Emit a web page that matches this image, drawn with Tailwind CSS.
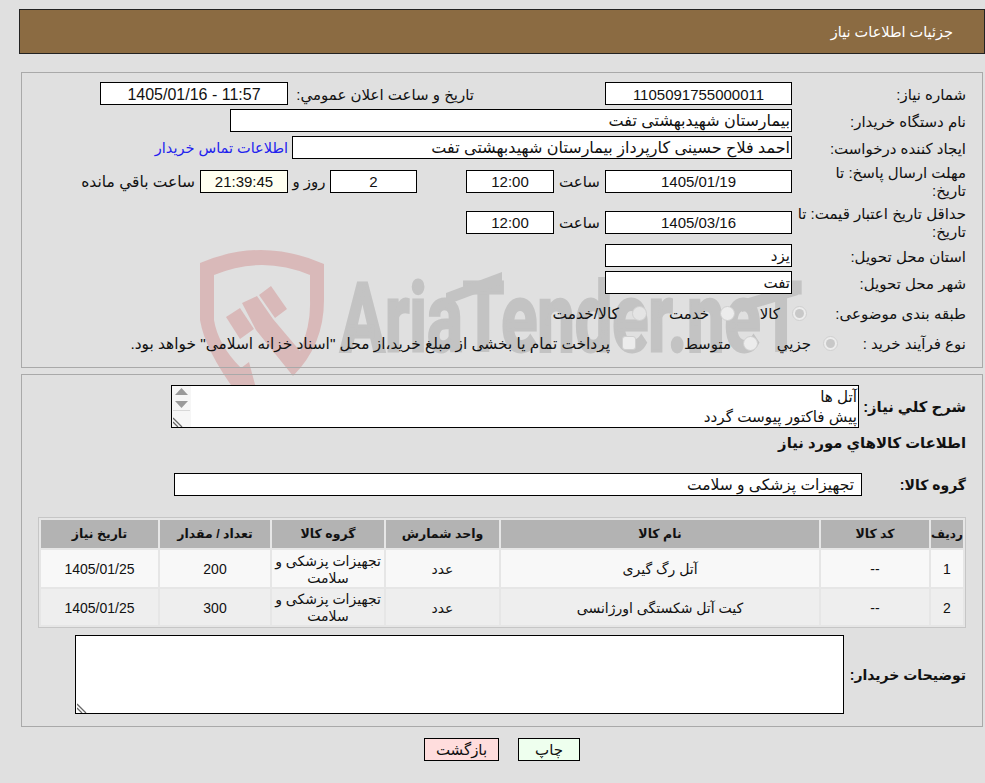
<!DOCTYPE html>
<html lang="fa" dir="rtl">
<head>
<meta charset="utf-8">
<script src="https://cdn.jsdelivr.net/npm/@tailwindcss/browser@4"></script>
<title>جزئیات اطلاعات نیاز</title>
</head>
<body class="m-0 bg-[#e0e0e0]">
<div class="relative w-[985px] h-[783px] overflow-hidden bg-[#e0e0e0] text-[#111] text-[15px] leading-[18px] font-['Liberation_Sans','DejaVu_Sans',sans-serif]">

  <svg class="absolute left-0 top-0 z-0" width="985" height="400" viewBox="0 0 985 400" aria-hidden="true">
    <path fill="#d9b9b9" d="M200 263Q262 236.500 324 264L324 300Q324 345 293 376L256 330L242 303L257 296L273 319L300 351Q311 325 310 300L310 275Q262 255 214 275L214 320Q218 345 241 368L249 362L257 392L236 392Q205 350 200 320Z"/>
    <path fill="#d9b9b9" d="M226 317L240 308L254 329L240 339Z"/>
    <path fill="#d9b9b9" d="M259 295L271 286L287 309L275 318Z"/>
    <text x="340" y="351" textLength="462" lengthAdjust="spacingAndGlyphs" fill="#c3c3c3" stroke="#c3c3c3" stroke-width="3" font-family="Roboto" font-weight="700" font-size="96" direction="ltr">AriaTender.neT</text>
    <polygon fill="#c3c3c3" points="446,293 502,272 502,284 446,305"/>
    <polygon fill="#c3c3c3" points="742,300 798,283 798,295 742,312"/>
  </svg>

  <div class="relative z-10 pt-[9px] pl-[19px]">
    <header class="h-[45px] border border-[#222] bg-[#8b6b42] pr-[31px] flex items-center text-white text-[14.500px]">جزئیات اطلاعات نیاز</header>

    <section class="mt-[18px] mr-[2px] ml-[2px] h-[296px] border border-[#a9a9a9] pr-[16px] pt-[9px]">
      <div class="flex h-[23px] items-center">
        <div class="w-[174px] shrink-0 pt-[2px]">شماره نیاز:</div>
        <div class="w-[187px] h-full border border-black bg-white flex items-center justify-center pt-[2px]" dir="ltr">1105091755000011</div>
        <div class="w-[131px] shrink-0"></div>
        <div class="w-[186px] shrink-0 pt-[2px]">تاریخ و ساعت اعلان عمومي:</div>
        <div class="w-[188px] h-full border border-black bg-white flex items-center justify-center text-[16px] pt-[2px]" dir="ltr">1405/01/16 - 11:57</div>
      </div>
      <div class="flex h-[23px] items-center mt-[4px]">
        <div class="w-[174px] shrink-0 pt-[2px]">نام دستگاه خریدار:</div>
        <div class="w-[562px] h-full border border-black bg-white flex items-center pr-[1px] text-[16px]">بیمارستان شهیدبهشتی تفت</div>
      </div>
      <div class="flex h-[23px] items-center mt-[4px]">
        <div class="w-[174px] shrink-0 pt-[2px]">ایجاد کننده درخواست:</div>
        <div class="w-[500px] h-full border border-black bg-white flex items-center pr-[1px] text-[16px]">احمد فلاح حسینی کارپرداز بیمارستان شهیدبهشتی تفت</div>
        <a class="mr-[4px] text-[#2222ee] text-[14.500px]">اطلاعات تماس خریدار</a>
      </div>
      <div class="flex h-[36px] items-center mt-[4px]">
        <div class="w-[174px] shrink-0 pl-[20px] pt-[2px]">مهلت ارسال پاسخ: تا تاریخ:</div>
        <div class="w-[187px] h-[23px] border border-black bg-white flex items-center justify-center pt-[2px]" dir="ltr">1405/01/19</div>
        <div class="w-[51px] text-center shrink-0 pt-[2px]">ساعت</div>
        <div class="w-[88px] h-[23px] border border-black bg-white flex items-center justify-center pt-[2px]" dir="ltr">12:00</div>
        <div class="w-[49px] shrink-0"></div>
        <div class="w-[87px] h-[23px] border border-black bg-white flex items-center justify-center pt-[2px]" dir="ltr">2</div>
        <div class="w-[42px] text-center shrink-0 pt-[2px]">روز و</div>
        <div class="w-[88px] h-[23px] border border-black bg-[#fffff0] flex items-center justify-center pt-[2px]" dir="ltr">21:39:45</div>
        <div class="mr-[5px] pt-[2px] text-[15.500px]">ساعت باقي مانده</div>
      </div>
      <div class="flex h-[36px] items-center mt-[5px]">
        <div class="w-[174px] shrink-0 pl-[2px] pt-[2px]">حداقل تاریخ اعتبار قیمت: تا تاریخ:</div>
        <div class="w-[187px] h-[23px] border border-black bg-white flex items-center justify-center pt-[2px]" dir="ltr">1405/03/16</div>
        <div class="w-[51px] text-center shrink-0 pt-[2px]">ساعت</div>
        <div class="w-[88px] h-[23px] border border-black bg-white flex items-center justify-center pt-[2px]" dir="ltr">12:00</div>
      </div>
      <div class="flex h-[23px] items-center mt-[4px]">
        <div class="w-[174px] shrink-0 pt-[2px]">استان محل تحویل:</div>
        <div class="w-[187px] h-full border border-black bg-white flex items-center pr-[1px]">یزد</div>
      </div>
      <div class="flex h-[23px] items-center mt-[4px]">
        <div class="w-[174px] shrink-0 pt-[2px]">شهر محل تحویل:</div>
        <div class="w-[187px] h-full border border-black bg-white flex items-center pr-[1px]">تفت</div>
      </div>
      <div class="flex h-[30px] items-center mt-[4px]">
        <div class="w-[159px] shrink-0 pt-[2px]">طبقه بندی موضوعی:</div>
        <div class="w-[72px] shrink-0 flex items-center gap-[12px]">
          <span class="size-[15px] rounded-full border border-[#d0d0d0] bg-[#ececec] shrink-0 flex items-center justify-center"><span class="size-[9px] rounded-full bg-[#c8c8c8]"></span></span><span class="pt-[2px]">کالا</span>
        </div>
        <div class="w-[88px] shrink-0 flex items-center gap-[11px]">
          <span class="size-[15px] rounded-full border border-[#cfcfcf] bg-[#ececec] shrink-0"></span><span class="pt-[2px]">خدمت</span>
        </div>
        <div class="flex items-center gap-[13px]">
          <span class="size-[15px] rounded-full border border-[#cfcfcf] bg-[#e4e4e4] shrink-0"></span><span class="text-[15.500px] pt-[2px]">کالا/خدمت</span>
        </div>
      </div>
      <div class="flex h-[30px] items-center">
        <div class="w-[128px] shrink-0 pt-[2px]">نوع فرآیند خرید :</div>
        <div class="w-[80px] shrink-0 flex items-center gap-[12px]">
          <span class="size-[15px] rounded-full border border-[#d0d0d0] bg-[#ececec] shrink-0 flex items-center justify-center"><span class="size-[9px] rounded-full bg-[#c8c8c8]"></span></span><span class="pt-[2px]">جزیي</span>
        </div>
        <div class="w-[122px] shrink-0 flex items-center gap-[12px]">
          <span class="size-[15px] rounded-full border border-[#cfcfcf] bg-[#ececec] shrink-0"></span><span class="pt-[2px]">متوسط</span>
        </div>
        <div class="flex items-center gap-[12px]">
          <span class="size-[14px] rounded-[3px] border border-[#cfcfcf] bg-[#ececec] shrink-0"></span><span class="text-[15.400px] pt-[2px]">پرداخت تمام یا بخشی از مبلغ خرید،از محل "اسناد خزانه اسلامی" خواهد بود.</span>
        </div>
      </div>
    </section>

    <section class="mt-[6px] mr-[2px] ml-[2px] h-[353px] border border-[#a9a9a9] pr-[16px] pt-[10px]">
      <div class="flex items-center h-[43px]">
        <div class="w-[107px] shrink-0 font-bold text-[14.800px]">شرح کلي نياز:</div>
        <div class="relative w-[688px] h-full border border-black bg-white pr-[1px]">
          <p class="leading-[20px] pt-[1px] text-[15.200px]">آتل ها<br>پیش فاکتور پیوست گردد</p>
          <div class="absolute left-0 top-0 bottom-0 w-[19px] bg-[#f6f6f6] flex flex-col items-center">
            <svg class="mt-[2px]" width="17" height="23" viewBox="0 0 17 23"><path fill="#9a9a9a" d="M8.500 0L15 7H2Z"/><path fill="#9a9a9a" d="M2 13H15L8.500 20Z"/><path stroke="#d8d8d8" d="M0 22.500H17" fill="none"/></svg>
            <svg class="absolute left-[1px] bottom-0" width="11" height="10" viewBox="0 0 11 10"><path stroke="#666" stroke-width="1.300" d="M0 1L9 10M0 5L5 10" fill="none"/></svg>
          </div>
        </div>
      </div>
      <div class="h-[30px] flex items-center font-bold text-[14.800px]">اطلاعات کالاهاي مورد نياز</div>
      <div class="flex items-center h-[23px] mt-[15px]">
        <div class="w-[104px] shrink-0 font-bold text-[14px]">گروه کالا:</div>
        <div class="w-[688px] h-full border border-black bg-white flex items-center pr-[7px] text-[15.500px]">تجهیزات پزشکی و سلامت</div>
      </div>

      <div class="mt-[21px] border border-[#c6c6c6] bg-[#e6e6e6] w-[928px] h-[111px]">
        <table class="w-full table-fixed border-separate border-spacing-[2px] text-center text-[14px] leading-[17px]">
          <colgroup>
            <col class="w-[32px]"><col class="w-[108px]"><col class="w-[318px]"><col class="w-[113px]"><col class="w-[112px]"><col class="w-[110px]"><col>
          </colgroup>
          <thead>
            <tr class="h-[28px] bg-[#b3b3b3] font-bold text-[12.500px]">
              <th class="p-0 text-[12px]">ردیف</th><th class="p-0">کد کالا</th><th class="p-0">نام کالا</th><th class="p-0">واحد شمارش</th><th class="p-0">گروه کالا</th><th class="p-0">تعداد / مقدار</th><th class="p-0">تاریخ نیاز</th>
            </tr>
          </thead>
          <tbody>
            <tr class="h-[37px] bg-[#f8f8f8]">
              <td class="p-0 pt-[2px]">1</td><td class="p-0 pt-[2px]">--</td><td class="p-0 pt-[2px]">آتل رگ گیری</td><td class="p-0 pt-[2px]">عدد</td><td class="p-0 pt-[2px]">تجهیزات پزشکی و سلامت</td><td class="p-0 pt-[2px]">200</td><td class="p-0 pt-[2px]">1405/01/25</td>
            </tr>
            <tr class="h-[36px] bg-[#eeeeee]">
              <td class="p-0 pt-[2px]">2</td><td class="p-0 pt-[2px]">--</td><td class="p-0 pt-[2px]">کیت آتل شکستگی اورژانسی</td><td class="p-0 pt-[2px]">عدد</td><td class="p-0 pt-[2px]">تجهیزات پزشکی و سلامت</td><td class="p-0 pt-[2px]">300</td><td class="p-0 pt-[2px]">1405/01/25</td>
            </tr>
          </tbody>
        </table>
      </div>

      <div class="flex items-center h-[79px] mt-[7px]">
        <div class="w-[122px] shrink-0 font-bold text-[14px] whitespace-nowrap">توضیحات خریدار:</div>
        <div class="relative w-[769px] h-full border border-black bg-white">
          <svg class="absolute left-[1px] bottom-0" width="11" height="10" viewBox="0 0 11 10"><path stroke="#666" stroke-width="1.300" d="M0 1L9 10M0 5L5 10" fill="none"/></svg>
        </div>
      </div>
    </section>

    <div class="flex justify-start gap-[19px] mt-[11px] pr-[405px]">
      <button class="w-[62px] h-[23px] border border-black bg-[#eeffee] flex items-center justify-center">چاپ</button>
      <button class="w-[75px] h-[23px] border border-black bg-[#ffdddd] flex items-center justify-center">بازگشت</button>
    </div>
  </div>
</div>
</body>
</html>
